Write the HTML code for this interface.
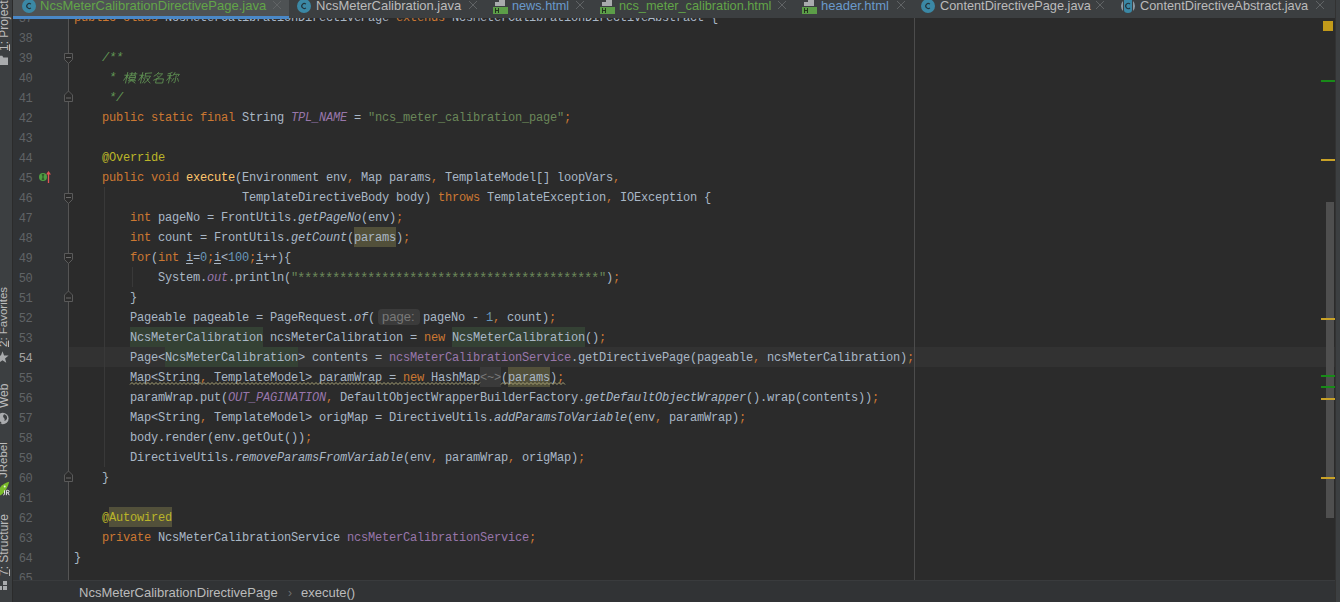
<!DOCTYPE html>
<html><head><meta charset="utf-8">
<style>
*{margin:0;padding:0;box-sizing:border-box}
html,body{width:1340px;height:602px;overflow:hidden;background:#2b2b2b}
body{position:relative;font-family:"Liberation Sans",sans-serif}
.abs{position:absolute}
#lstripe{position:absolute;left:0;top:0;width:12px;height:602px;background:#3c3f41}
#lborder{position:absolute;left:12px;top:0;width:1px;height:602px;background:#2b2b2b}
#rstripe{position:absolute;left:1335px;top:0;width:5px;height:602px;background:#3c3f41}
#rborder{position:absolute;left:1335px;top:0;width:1px;height:602px;background:#323232}
#tabs{position:absolute;left:13px;top:0;width:1322px;height:18px;background:#3c3f41}
#seltab{position:absolute;left:13px;top:0;width:276px;height:16px;background:#4e5254}
#tabline{position:absolute;left:13px;top:16px;width:276px;height:3px;background:#4a88c7}
.tab{position:absolute;top:-3px;font-size:13px;line-height:17px;color:#bbbbbb;white-space:nowrap}
.close{position:absolute;top:1px;width:9px;height:9px}
#gutter{position:absolute;left:13px;top:18px;width:55px;height:562px;background:#313335}
#gline{position:absolute;left:68px;top:18px;width:1px;height:562px;background:#555555}
#caretrow{position:absolute;left:69px;top:347px;width:1266px;height:20px;background:#323232}
#margin{position:absolute;left:914px;top:18px;width:1px;height:562px;background:#4c4c4c}
.num{position:absolute;left:12px;width:20px;height:20px;margin-top:2px;text-align:right;font-family:"Liberation Mono",monospace;font-size:12px;letter-spacing:-0.6px;line-height:20px;color:#606366}
.num.cur{color:#a4a3a3}
.ln{position:absolute;left:0;height:20px;width:1300px}
.ln span{position:absolute;top:1px;font-family:"Liberation Mono",monospace;font-size:12px;letter-spacing:-0.2px;line-height:21px;white-space:pre;color:#a9b7c6}
.ln .k{color:#cc7832}
.ln .s{color:#6a8759}
.ln .ast{font-size:14px;letter-spacing:-1.4px;top:1.5px;margin-left:-1px}
.ln .n{color:#6897bb}
.ln .c{color:#629755;font-style:italic}
.ln .a{color:#bbb529}
.ln .f{color:#9876aa}
.ln .fi{color:#9876aa;font-style:italic}
.ln .m{color:#ffc66d}
.ln .i{font-style:italic}
.ln .u{text-decoration:underline;text-underline-offset:2px}
.ln .g{color:#787878}
.ln .hint{top:2px;height:16px;width:42px;background:#3b3b3b;border-radius:4px;font-family:"Liberation Sans",sans-serif;font-size:13px;line-height:16px;color:#787878;padding-left:4px;letter-spacing:0}
.hg{position:absolute;height:20px;background:#344134}
.hy{position:absolute;height:20px;background:#52503a}
.hgr{position:absolute;height:20px;background:#3a3a3a}
#bread{position:absolute;left:13px;top:580px;width:1322px;height:22px;background:#313335;border-top:1px solid #393b3d}
.stripetxt{position:absolute;font-size:11.5px;color:#bbbbbb;white-space:nowrap;transform-origin:0 0;transform:rotate(-90deg)}
.mark{position:absolute;left:1321px;width:14px;height:2px}
</style></head><body>
<div id="lstripe"></div><div id="lborder"></div>
<div id="rstripe"></div><div id="rborder"></div>
<div id="gutter"></div>

<div id="caretrow"></div>
<div id="margin"></div>
<div class="hy" style="left:354px;top:227px;width:42px"></div>
<div class="hg" style="left:130px;top:327px;width:133px"></div>
<div class="hg" style="left:452px;top:327px;width:133px"></div>
<div class="hg" style="left:165px;top:347px;width:133px"></div>
<div class="hy" style="left:508px;top:367px;width:42px"></div>
<div class="hgr" style="left:480px;top:367px;width:21px"></div>
<div class="hy" style="left:109px;top:507px;width:63px"></div>
<div id="gline"></div>
<div class="num" style="top:7px">37</div>
<div class="num" style="top:27px">38</div>
<div class="num" style="top:47px">39</div>
<div class="num" style="top:67px">40</div>
<div class="num" style="top:87px">41</div>
<div class="num" style="top:107px">42</div>
<div class="num" style="top:127px">43</div>
<div class="num" style="top:147px">44</div>
<div class="num" style="top:167px">45</div>
<div class="num" style="top:187px">46</div>
<div class="num" style="top:207px">47</div>
<div class="num" style="top:227px">48</div>
<div class="num" style="top:247px">49</div>
<div class="num" style="top:267px">50</div>
<div class="num" style="top:287px">51</div>
<div class="num" style="top:307px">52</div>
<div class="num" style="top:327px">53</div>
<div class="num cur" style="top:347px">54</div>
<div class="num" style="top:367px">55</div>
<div class="num" style="top:387px">56</div>
<div class="num" style="top:407px">57</div>
<div class="num" style="top:427px">58</div>
<div class="num" style="top:447px">59</div>
<div class="num" style="top:467px">60</div>
<div class="num" style="top:487px">61</div>
<div class="num" style="top:507px">62</div>
<div class="num" style="top:527px">63</div>
<div class="num" style="top:547px">64</div>
<div class="num" style="top:567px">65</div>
<div class="ln" style="top:7px"><span class="k" style="left:74px">public</span><span class="k" style="left:123px">class</span><span class="t" style="left:158px"> NcsMeterCalibrationDirectivePage </span><span class="k" style="left:396px">extends</span><span class="t" style="left:445px"> NcsMeterCalibrationDirectiveAbstract {</span></div>
<div class="ln" style="top:47px"><span class="c" style="left:102px">/**</span></div>
<div class="ln" style="top:67px"><span class="c" style="left:109px">*</span></div>
<div class="ln" style="top:87px"><span class="c" style="left:109px">*/</span></div>
<div class="ln" style="top:107px"><span class="k" style="left:102px">public</span><span class="k" style="left:151px">static</span><span class="k" style="left:200px">final</span><span class="t" style="left:235px"> String </span><span class="fi" style="left:291px">TPL_NAME</span><span class="t" style="left:347px"> = </span><span class="s" style="left:368px">&quot;ncs_meter_calibration_page&quot;</span><span class="k" style="left:564px">;</span></div>
<div class="ln" style="top:147px"><span class="a" style="left:102px">@Override</span></div>
<div class="ln" style="top:167px"><span class="k" style="left:102px">public</span><span class="k" style="left:151px">void</span><span class="m" style="left:186px">execute</span><span class="t" style="left:235px">(Environment env</span><span class="k" style="left:347px">,</span><span class="t" style="left:354px"> Map params</span><span class="k" style="left:431px">,</span><span class="t" style="left:438px"> TemplateModel[] loopVars</span><span class="k" style="left:613px">,</span></div>
<div class="ln" style="top:187px"><span class="t" style="left:242px">TemplateDirectiveBody body) </span><span class="k" style="left:438px">throws</span><span class="t" style="left:480px"> TemplateException</span><span class="k" style="left:606px">,</span><span class="t" style="left:613px"> IOException {</span></div>
<div class="ln" style="top:207px"><span class="k" style="left:130px">int</span><span class="t" style="left:151px"> pageNo = FrontUtils.</span><span class="i" style="left:298px">getPageNo</span><span class="t" style="left:361px">(env)</span><span class="k" style="left:396px">;</span></div>
<div class="ln" style="top:227px"><span class="k" style="left:130px">int</span><span class="t" style="left:151px"> count = FrontUtils.</span><span class="i" style="left:291px">getCount</span><span class="t" style="left:347px">(params)</span><span class="k" style="left:403px">;</span></div>
<div class="ln" style="top:247px"><span class="k" style="left:130px">for</span><span class="t" style="left:151px">(</span><span class="k" style="left:158px">int</span><span class="u" style="left:186px">i</span><span class="t" style="left:193px">=</span><span class="n" style="left:200px">0</span><span class="k" style="left:207px">;</span><span class="u" style="left:214px">i</span><span class="t" style="left:221px">&lt;</span><span class="n" style="left:228px">100</span><span class="k" style="left:249px">;</span><span class="u" style="left:256px">i</span><span class="t" style="left:263px">++){</span></div>
<div class="ln" style="top:267px"><span class="t" style="left:158px">System.</span><span class="fi" style="left:207px">out</span><span class="t" style="left:228px">.println(</span><span class="s" style="left:291px">&quot;</span><span class="s ast" style="left:298px">*******************************************</span><span class="s" style="left:599px">&quot;</span><span class="t" style="left:606px">)</span><span class="k" style="left:613px">;</span></div>
<div class="ln" style="top:287px"><span class="t" style="left:130px">}</span></div>
<div class="ln" style="top:307px"><span class="t" style="left:130px">Pageable pageable = PageRequest.</span><span class="i" style="left:354px">of</span><span class="t" style="left:368px">(</span><span class="hint" style="left:378px">page:</span><span class="t" style="left:423px">pageNo - </span><span class="n" style="left:486px">1</span><span class="k" style="left:493px">,</span><span class="t" style="left:500px"> count)</span><span class="k" style="left:549px">;</span></div>
<div class="ln" style="top:327px"><span class="t" style="left:130px">NcsMeterCalibration ncsMeterCalibration = </span><span class="k" style="left:424px">new</span><span class="t" style="left:445px"> NcsMeterCalibration()</span><span class="k" style="left:599px">;</span></div>
<div class="ln" style="top:347px"><span class="t" style="left:130px">Page&lt;NcsMeterCalibration&gt; contents = </span><span class="f" style="left:389px">ncsMeterCalibrationService</span><span class="t" style="left:571px">.getDirectivePage(pageable</span><span class="k" style="left:753px">,</span><span class="t" style="left:760px"> ncsMeterCalibration)</span><span class="k" style="left:907px">;</span></div>
<div class="ln" style="top:367px"><span class="t" style="left:130px">Map&lt;String</span><span class="k" style="left:200px">,</span><span class="t" style="left:207px"> TemplateModel&gt; paramWrap = </span><span class="k" style="left:403px">new</span><span class="t" style="left:424px"> HashMap</span><span class="g" style="left:480px">&lt;~&gt;</span><span class="t" style="left:501px">(params)</span><span class="k" style="left:557px">;</span></div>
<div class="ln" style="top:387px"><span class="t" style="left:130px">paramWrap.put(</span><span class="fi" style="left:228px">OUT_PAGINATION</span><span class="k" style="left:326px">,</span><span class="t" style="left:333px"> DefaultObjectWrapperBuilderFactory.</span><span class="i" style="left:585px">getDefaultObjectWrapper</span><span class="t" style="left:746px">().wrap(contents))</span><span class="k" style="left:872px">;</span></div>
<div class="ln" style="top:407px"><span class="t" style="left:130px">Map&lt;String</span><span class="k" style="left:200px">,</span><span class="t" style="left:207px"> TemplateModel&gt; origMap = DirectiveUtils.</span><span class="i" style="left:494px">addParamsToVariable</span><span class="t" style="left:627px">(env</span><span class="k" style="left:655px">,</span><span class="t" style="left:662px"> paramWrap)</span><span class="k" style="left:739px">;</span></div>
<div class="ln" style="top:427px"><span class="t" style="left:130px">body.render(env.getOut())</span><span class="k" style="left:305px">;</span></div>
<div class="ln" style="top:447px"><span class="t" style="left:130px">DirectiveUtils.</span><span class="i" style="left:235px">removeParamsFromVariable</span><span class="t" style="left:403px">(env</span><span class="k" style="left:431px">,</span><span class="t" style="left:438px"> paramWrap</span><span class="k" style="left:508px">,</span><span class="t" style="left:515px"> origMap)</span><span class="k" style="left:578px">;</span></div>
<div class="ln" style="top:467px"><span class="t" style="left:102px">}</span></div>
<div class="ln" style="top:507px"><span class="a" style="left:102px">@</span><span class="a" style="left:109px">Autowired</span></div>
<div class="ln" style="top:527px"><span class="k" style="left:102px">private</span><span class="t" style="left:151px"> NcsMeterCalibrationService </span><span class="f" style="left:347px">ncsMeterCalibrationService</span><span class="k" style="left:529px">;</span></div>
<div class="ln" style="top:547px"><span class="t" style="left:74px">}</span></div>
<svg class="abs" style="left:0;top:0" width="200" height="100">
 <g fill="none" stroke="#629755" stroke-width="0.85" stroke-linecap="round" stroke-linejoin="round">
  <g transform="translate(125,72) skewX(-12) scale(0.95,0.92)">
   <path d="M0.5 3.5H5M3 0.5V12M3 4L0.5 9M3 4.5L5 7M5.5 2H13M7.5 0.5V3.5M11 0.5V3.5M6.5 4H12V8H6.5ZM6.5 6H12M5.5 9.5H13M9.2 8L6 12M9.5 9.5L13 12"/>
  </g>
  <g transform="translate(140,72) skewX(-12) scale(0.95,0.92)">
   <path d="M0.5 3.5H5M3 0.5V12M3 4L0.5 9M3 4.5L5 7M6 1.5L12.5 1M6.5 1.5V7Q6.5 10 5 12M7.5 4.5H12Q11 9 7 12M8.5 6.5Q10 10 13 12"/>
  </g>
  <g transform="translate(154,72) skewX(-12) scale(0.95,0.92)">
   <path d="M5 0.5Q3.5 3 1 4.5M4.5 2H9.5Q7 7 1.5 9M4 4L6 5.5M4.5 7.5H11.5V12H4.5Z"/>
  </g>
  <g transform="translate(168,72) skewX(-12) scale(0.95,0.92)">
   <path d="M4.5 0.5Q3 1.5 0.5 2M0.5 4H5M3 2V12M3 5L0.5 9M3 5.5L5 7.5M7.5 0.5L6 4M7 2.5H12.5L11.5 4.5M9.5 4V11Q9.5 12 8.5 11.5M7.5 7L6 10M11.5 7L13 10"/>
  </g>
 </g>
</svg>

<svg class="abs" style="left:0;top:0" width="1340" height="602">
 <g fill="#2b2b2b" stroke="#5a5a5a" stroke-width="1">
  <path d="M64.5 53.5h8v6l-4 4l-4 -4z"/>
  <path d="M64.5 101.5h8v-6.5l-4 -4l-4 4z"/>
  <path d="M64.5 193.5h8v6l-4 4l-4 -4z"/>
  <path d="M64.5 253.5h8v6l-4 4l-4 -4z"/>
  <path d="M64.5 301.5h8v-6.5l-4 -4l-4 4z"/>
  <path d="M64.5 481.5h8v-6.5l-4 -4l-4 4z"/>
 </g>
 <g stroke="#6a6a6a" stroke-width="1">
  <path d="M66 57.5h5M66 98h5M66 197.5h5M66 257.5h5M66 298h5M66 478h5"/>
 </g>
 <circle cx="43" cy="177" r="4" fill="#4f9e43"/>
 <path d="M41.8 174.8h2.4M43 174.8v4.4M41.8 179.2h2.4" stroke="#1d2b1a" stroke-width="0.8"/>
 <path d="M48.5 183v-10" stroke="#e05555" stroke-width="1.3"/>
 <path d="M46 174.5l2.5 -3.5l2.5 3.5z" fill="#e05555"/>
 <!-- indent guides -->
 <path d="M104.5 187v280M132.5 267v20" stroke="#393939" stroke-width="1"/>
 <!-- wave -->
 <path id="wave" d="M130 384.5L132 382.5L134 384.5L136 382.5L138 384.5L140 382.5L142 384.5L144 382.5L146 384.5L148 382.5L150 384.5L152 382.5L154 384.5L156 382.5L158 384.5L160 382.5L162 384.5L164 382.5L166 384.5L168 382.5L170 384.5L172 382.5L174 384.5L176 382.5L178 384.5L180 382.5L182 384.5L184 382.5L186 384.5L188 382.5L190 384.5L192 382.5L194 384.5L196 382.5L198 384.5L200 382.5L202 384.5L204 382.5L206 384.5L208 382.5L210 384.5L212 382.5L214 384.5L216 382.5L218 384.5L220 382.5L222 384.5L224 382.5L226 384.5L228 382.5L230 384.5L232 382.5L234 384.5L236 382.5L238 384.5L240 382.5L242 384.5L244 382.5L246 384.5L248 382.5L250 384.5L252 382.5L254 384.5L256 382.5L258 384.5L260 382.5L262 384.5L264 382.5L266 384.5L268 382.5L270 384.5L272 382.5L274 384.5L276 382.5L278 384.5L280 382.5L282 384.5L284 382.5L286 384.5L288 382.5L290 384.5L292 382.5L294 384.5L296 382.5L298 384.5L300 382.5L302 384.5L304 382.5L306 384.5L308 382.5L310 384.5L312 382.5L314 384.5L316 382.5L318 384.5L320 382.5L322 384.5L324 382.5L326 384.5L328 382.5L330 384.5L332 382.5L334 384.5L336 382.5L338 384.5L340 382.5L342 384.5L344 382.5L346 384.5L348 382.5L350 384.5L352 382.5L354 384.5L356 382.5L358 384.5L360 382.5L362 384.5L364 382.5L366 384.5L368 382.5L370 384.5L372 382.5L374 384.5L376 382.5L378 384.5L380 382.5L382 384.5L384 382.5L386 384.5L388 382.5L390 384.5L392 382.5L394 384.5L396 382.5L398 384.5L400 382.5L402 384.5L404 382.5L406 384.5L408 382.5L410 384.5L412 382.5L414 384.5L416 382.5L418 384.5L420 382.5L422 384.5L424 382.5L426 384.5L428 382.5L430 384.5L432 382.5L434 384.5L436 382.5L438 384.5L440 382.5L442 384.5L444 382.5L446 384.5L448 382.5L450 384.5L452 382.5L454 384.5L456 382.5L458 384.5L460 382.5L462 384.5L464 382.5L466 384.5L468 382.5L470 384.5L472 382.5L474 384.5L476 382.5L478 384.5L480 382.5M501 384.5L503 382.5L505 384.5L507 382.5L509 384.5L511 382.5L513 384.5L515 382.5L517 384.5L519 382.5L521 384.5L523 382.5L525 384.5L527 382.5L529 384.5L531 382.5L533 384.5L535 382.5L537 384.5L539 382.5L541 384.5L543 382.5L545 384.5L547 382.5L549 384.5L551 382.5L553 384.5L555 382.5L557 384.5L559 382.5L561 384.5L563 382.5L565 384.5" fill="none" stroke="#a8a276" stroke-width="1"/>
 <!-- scroll markers -->
 <rect x="1323" y="21" width="10" height="10" fill="#c29a1a"/>
 <rect x="1326" y="202" width="8" height="316" fill="#4f4f4f"/>
 <g fill="#188a18">
  <rect x="1321" y="80" width="14" height="2"/>
  <rect x="1321" y="375" width="14" height="2"/>
  <rect x="1321" y="386" width="14" height="2"/>
 </g>
 <g fill="#c9a227">
  <rect x="1321" y="159" width="14" height="2"/>
  <rect x="1321" y="318" width="14" height="2"/>
  <rect x="1321" y="398" width="14" height="2"/>
  <rect x="1321" y="477" width="14" height="2"/>
 </g>
</svg>

<div id="tabs"></div>
<div id="seltab"></div>
<div id="tabline"></div>
<div id="bread"></div>
<div class="abs" style="left:79px;top:584px;font-size:13px;line-height:18px;color:#bbbbbb;white-space:nowrap">NcsMeterCalibrationDirectivePage</div>
<div class="abs" style="left:288px;top:584px;font-size:12px;line-height:18px;color:#707070">&#8250;</div>
<div class="abs" style="left:301px;top:584px;font-size:13px;line-height:18px;color:#bbbbbb;white-space:nowrap">execute()</div>

<!-- tab bar content -->
<div class="tab" style="left:40px;color:#62a548">NcsMeterCalibrationDirectivePage.java</div>
<div class="tab" style="left:316px">NcsMeterCalibration.java</div>
<div class="tab" style="left:512px;color:#6a9acb;font-size:12.7px;margin-top:1px">news.html</div>
<div class="tab" style="left:619px;color:#62a548;font-size:12.75px">ncs_meter_calibration.html</div>
<div class="tab" style="left:821px;color:#6a9acb">header.html</div>
<div class="tab" style="left:940px;font-size:12.75px">ContentDirectivePage.java</div>
<div class="tab" style="left:1140px;font-size:12.77px">ContentDirectiveAbstract.java</div>
<svg class="abs" style="left:0;top:0" width="1340" height="18">
 <g fill="#3b88a5">
  <circle cx="29" cy="6" r="7"/>
  <circle cx="304" cy="6" r="7"/>
  <circle cx="928" cy="6" r="7"/>
  <path d="M1124 -1h8v11a4 3 0 0 1 -8 0z"/>
 </g>
 <g fill="#8d9ba5">
  <path d="M1123 1.1A7 7 0 0 0 1123 10.9Z"/>
  <path d="M1133 1.1A7 7 0 0 1 1133 10.9Z"/>
 </g>
 <g fill="none" stroke="#22343c" stroke-width="1.15">
  <path d="M30.9 4.1a2.5 2.5 0 1 0 0 3.8"/>
  <path d="M305.9 4.1a2.5 2.5 0 1 0 0 3.8"/>
  <path d="M929.9 4.1a2.5 2.5 0 1 0 0 3.8"/>
  <path d="M1130 4a2.6 2.6 0 1 0 0 4"/>
 </g>
 <g>
  <path d="M495 -2h10v8h-10z" fill="#a9abad"/><path d="M495 -2l4 0l0 4l-4 0z" fill="#3c3f41"/>
  <rect x="493" y="7" width="15" height="7" fill="#5c9e48"/>
  <path d="M495.5 8v5M498.5 8v5M495.5 10.5h3" stroke="#1e2a1a" stroke-width="0.9"/>
  <path d="M602 -2h10v8h-10z" fill="#a9abad"/><path d="M602 -2l4 0l0 4l-4 0z" fill="#3c3f41"/>
  <rect x="600" y="7" width="15" height="7" fill="#5c9e48"/>
  <path d="M602.5 8v5M605.5 8v5M602.5 10.5h3" stroke="#1e2a1a" stroke-width="0.9"/>
  <path d="M804 -2h10v8h-10z" fill="#a9abad"/><path d="M804 -2l4 0l0 4l-4 0z" fill="#3c3f41"/>
  <rect x="802" y="7" width="15" height="7" fill="#5c9e48"/>
  <path d="M804.5 8v5M807.5 8v5M804.5 10.5h3" stroke="#1e2a1a" stroke-width="0.9"/>
 </g>
 <g stroke="#606365" stroke-width="1">
  <path d="M273 1l8 8M281 1l-8 8"/>
  <path d="M469 1l8 8M477 1l-8 8"/>
  <path d="M576 1l8 8M584 1l-8 8"/>
  <path d="M778 1l8 8M786 1l-8 8"/>
  <path d="M897 1l8 8M905 1l-8 8"/>
  <path d="M1096 1l8 8M1104 1l-8 8"/>
  <path d="M1316 1l8 8M1324 1l-8 8"/>
 </g>
<rect x="1337" y="168" width="3" height="1.3" fill="#c8c8c8"/></svg>

<div class="stripetxt" style="left:-3px;top:51px;font-size:12px"><u>1</u>: Project</div>
<div class="stripetxt" style="left:-3px;top:347px"><u>2</u>: Favorites</div>
<div class="stripetxt" style="left:-3px;top:408px;font-size:12px">Web</div>
<div class="stripetxt" style="left:-3px;top:478px">JRebel</div>
<div class="stripetxt" style="left:-3px;top:576px;font-size:12px"><u>7</u>: Structure</div>
<svg class="abs" style="left:0;top:0" width="12" height="602">
 <path d="M0 55.8h2.3l1 1.7h4.7v7.5h-8z" fill="#a9abad"/>
 <path d="M2.50 351.20L4.09 355.42L8.59 355.62L5.07 358.43L6.26 362.78L2.50 360.30L-1.26 362.78L-0.07 358.43L-3.59 355.62L0.91 355.42Z" fill="#a9abad"/>
 <circle cx="2.8" cy="418.5" r="5.8" fill="#a9abad"/>
 <path d="M4.2 414.3c-1.2 1 -1.5 2.6 -0.4 3.4c1 0.8 1 2 0.6 3.2c1.5 -0.3 2.8 -1.6 2.7 -3.4c-0.1 -1.6 -1.3 -2.8 -2.9 -3.2zM0 421.5c0.8 0.3 1.5 1 1.6 2l-1.6 0.3z" fill="#3c3f41"/>
 <path d="M9.2 481.8C6 482.3 2.5 484.5 0 487.5V495.5C3.5 494 7.5 489 9.2 481.8Z" fill="#7bbd2a"/>
 <circle cx="4.7" cy="486.6" r="1" fill="#e8f0e0"/>
 <path d="M4.5 490.3v3.6q0 1.1 -1.2 1.1M6.4 495.2v-4.9h1.4q1.2 0 1.2 1.2q0 1.2 -1.2 1.2h-1.4M7.8 492.7l1.4 2.5" stroke="#e6e6e6" stroke-width="1" fill="none"/>
 <rect x="3" y="581" width="4" height="4" fill="#a9abad"/>
 <rect x="-2" y="586" width="4" height="4" fill="#a9abad"/>
 <rect x="3" y="586" width="4" height="4" fill="#a9abad"/>
</svg>

</body></html>
